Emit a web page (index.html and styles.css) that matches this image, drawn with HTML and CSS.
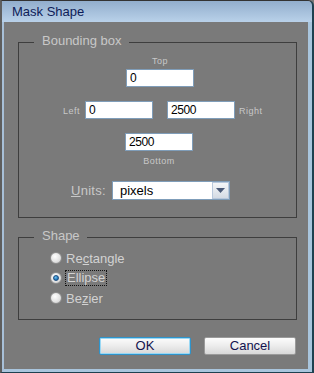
FILE: index.html
```html
<!DOCTYPE HTML>
<html>

	<head>
		<meta http-equiv="Content-Type" content="text/html; charset=utf-8">
		<link rel="stylesheet" href="styles.css">
	</head>

	<body>
		<div class="window">
			<div class="titlebar">Mask Shape</div>
			<div class="frame">
				<fieldset class="group bounds">
					<legend>Bounding box</legend>
					<div class="stack top">
						<span class="small">Top</span>
						<input class="field" type="text" value="0">
					</div>
					<div class="row sides">
						<span class="small side-left">Left</span>
						<input class="field" type="text" value="0">
						<input class="field right" type="text" value="2500">
						<span class="small side-right">Right</span>
					</div>
					<div class="stack bottom">
						<input class="field" type="text" value="2500">
						<span class="small">Bottom</span>
					</div>
					<div class="row units">
						<span class="units-label"><u>U</u>nits:</span>
						<div class="select">
							<span class="select-text">pixels</span>
							<span class="select-btn">
								<svg width="9" height="5" viewBox="0 0 9 5"><path d="M0 0H9L4.5 5Z" fill="#4a5a78"/></svg>
							</span>
						</div>
					</div>
				</fieldset>

				<fieldset class="group shape">
					<legend>Shape</legend>
					<div class="radio"><span class="dot"></span>Re<u>c</u>tangle</div>
					<div class="radio"><span class="dot checked"></span><span class="focus">Ellipse</span></div>
					<div class="radio"><span class="dot"></span>Be<u>z</u>ier</div>
				</fieldset>

				<div class="buttons">
					<button class="btn default">OK</button>
					<button class="btn">Cancel</button>
				</div>
			</div>
		</div>
	</body>

</html>
```

FILE: styles.css
```css
* {
	margin: 0;
	padding: 0;
	box-sizing: border-box;
}

body {
	width: 314px;
	height: 373px;
	font-family: "Liberation Sans", Arial, sans-serif;
	font-size: 13px;
	background: #7a7a7a;
}

.window {
	width: 314px;
	height: 373px;
	border-top: 1px solid #333;
	border-left: 2px solid #5e5e5e;
	border-right: 2px solid #1e4150;
	border-bottom: 1px solid #1e4150;
	border-top-right-radius: 6px;
	display: flex;
	flex-direction: column;
	overflow: hidden;
}

.titlebar {
	height: 21px;
	padding-left: 10px;
	line-height: 21px;
	color: #0e1c58;
	background: linear-gradient(#92aecd, #b9d1e9);
}

.frame {
	flex: 1;
	border-left: 2px solid #a8c0d8;
	border-right: 4px solid #a9c5dd;
	border-bottom: 3px solid #a9c5dd;
	background: #7a7a7a;
	padding-top: 11px;
}

.group {
	border: 1px solid #3e3e3e;
	margin: 0 11px 0 14px;
	padding: 0;
	min-width: 0;
}

.group legend {
	margin-left: 15px;
	padding: 0 7px 4px 8px;
	line-height: 15px;
	font-size: 13px;
	color: #c8c8c8;
}

.small {
	font-size: 9px;
	line-height: 11px;
	letter-spacing: 0.5px;
	color: #c8c8c8;
}

.field {
	width: 68px;
	height: 18px;
	border: 1px solid #7f9db9;
	background: #fff;
	padding-left: 3px;
	font-family: "Liberation Sans", Arial, sans-serif;
	font-size: 12px;
	letter-spacing: -0.4px;
	color: #000;
	outline: none;
}

.stack {
	width: 68px;
	display: flex;
	flex-direction: column;
	align-items: center;
}

.stack.top {
	margin: 4px 0 0 107px;
	gap: 2px;
}

.stack.bottom {
	margin: 14px 0 0 106px;
	gap: 5px;
}

.row {
	display: flex;
}

.sides {
	margin-top: 14px;
	align-items: flex-end;
}

.side-left {
	width: 66px;
	padding-right: 5px;
	margin-bottom: 2px;
	text-align: right;
}

.sides .right {
	margin-left: 14px;
}

.side-right {
	margin-left: 4px;
	margin-bottom: 2px;
}

.units {
	margin: 14px 0 17px;
	align-items: center;
}

.units-label {
	width: 87px;
	margin-right: 6px;
	text-align: right;
	color: #c8c8c8;
	letter-spacing: 0.3px;
}

.select {
	width: 118px;
	height: 19px;
	border: 1px solid #7f9db9;
	background: #fff;
	display: flex;
	align-items: stretch;
}

.select-text {
	flex: 1;
	padding-left: 7px;
	line-height: 17px;
	color: #000;
}

.select-btn {
	width: 17px;
	border: 1px solid #b8c8dc;
	background: linear-gradient(#f4f6f8, #d4dbe4);
	display: flex;
	align-items: center;
	justify-content: center;
}

.group.shape {
	margin-top: 10px;
	padding: 1px 0 11px;
}

.radio {
	height: 20px;
	display: flex;
	align-items: center;
	padding-left: 31px;
	color: #d2d2d2;
}

.dot {
	width: 12px;
	height: 12px;
	margin-right: 4px;
	border-radius: 50%;
	border: 1px solid #8e8e8e;
	background: radial-gradient(circle at 40% 35%, #ffffff, #e4e4e4 55%, #c4c4c4);
	display: flex;
	align-items: center;
	justify-content: center;
}

.dot.checked::after {
	content: "";
	width: 6px;
	height: 6px;
	border-radius: 50%;
	background: radial-gradient(circle at 40% 35%, #6fc0f0, #1a6eb0 70%);
	border: 1px solid #1c4d80;
	box-sizing: border-box;
}

.focus {
	margin-left: -1px;
	padding: 0 1px;
	line-height: 14px;
	border: 1px dotted #111;
}

.buttons {
	display: flex;
	justify-content: flex-end;
	gap: 13px;
	margin: 17px 12px 0 0;
}

.btn {
	width: 92px;
	height: 18px;
	border: 1px solid #9a9a9a;
	border-radius: 2px;
	background: linear-gradient(#fcfcfc, #ececec 50%, #d8d8d8);
	font-family: "Liberation Sans", Arial, sans-serif;
	font-size: 13px;
	line-height: 14px;
	color: #12124e;
}

.btn.default {
	border-color: #2e94cc;
	box-shadow: inset 0 0 0 1px #9ad8f4;
}
```
